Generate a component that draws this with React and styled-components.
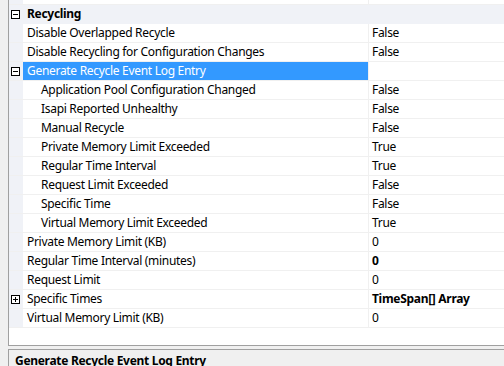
import React from "react";
import styled, { createGlobalStyle } from "styled-components";

const GlobalStyle = createGlobalStyle`
  html, body {
    margin: 0;
    padding: 0;
    background: #f0f0f0;
  }
  body {
    font-family: "Noto Sans", "Open Sans", sans-serif;
    font-size: 12px;
    letter-spacing: -0.3px;
    color: #000;
  }
`;

const Window = styled.div`
  width: 504px;
  height: 366px;
  overflow: hidden;
  display: flex;
  flex-direction: column;
  gap: 3px;
`;

const Grid = styled.div`
  margin-left: 8px;
  height: 345px;
  flex: none;
  border-left: 1px solid #a0a0a0;
  border-bottom: 1px solid #a0a0a0;
  background: #fff;
  overflow: hidden;
`;

const Scroller = styled.div`
  margin-top: -14px;
`;

const Row = styled.div`
  display: grid;
  grid-template-columns: 14px 346px 1fr;
  height: 18px;
  border-bottom: 1px solid ${(p) => (p.$category ? "#f0f2f7" : "#f0f0f0")};
  background: ${(p) => (p.$category ? "#f0f2f7" : "#fff")};
  line-height: 18px;
  white-space: nowrap;
`;

const Margin = styled.div`
  background: #f0f2f7;
  display: flex;
  align-items: center;
  padding-left: 2px;
`;

const Name = styled.div`
  padding-left: ${(p) => (p.$indent ? 18 : 4)}px;
  border-right: 1px solid ${(p) => (p.$category ? "#f0f2f7" : "#f0f0f0")};
  background: ${(p) => (p.$selected ? "#3399ff" : "transparent")};
  color: ${(p) => (p.$selected ? "#fff" : "#000")};
  font-weight: ${(p) => (p.$category ? 700 : 400)};
  overflow: hidden;
`;

const Value = styled.div`
  padding-left: 3px;
  font-weight: ${(p) => (p.$bold ? 700 : 400)};
  overflow: hidden;
`;

const Expander = styled.span`
  box-sizing: border-box;
  width: 9px;
  height: 9px;
  border: 1px solid #000;
  background: #fff;
  position: relative;
  margin-top: 1px;

  &::before {
    content: "";
    position: absolute;
    left: 1px;
    top: 3px;
    width: 5px;
    height: 1px;
    background: #000;
  }

  &::after {
    content: "";
    display: ${(p) => (p.$open ? "none" : "block")};
    position: absolute;
    left: 3px;
    top: 1px;
    width: 1px;
    height: 5px;
    background: #000;
  }
`;

const Description = styled.div`
  margin-left: 8px;
  flex: 1;
  border-left: 1px solid #a0a0a0;
  border-top: 1px solid #a0a0a0;
  background: #f0f0f0;
  padding: 2px 0 0 6px;
  font-weight: 700;
`;

const rows = [
  { label: "Shutdown Executable Parameters" },
  { label: "Recycling", category: true, expander: "open" },
  { label: "Disable Overlapped Recycle", value: "False" },
  { label: "Disable Recycling for Configuration Changes", value: "False" },
  { label: "Generate Recycle Event Log Entry", value: "", expander: "open", selected: true },
  { label: "Application Pool Configuration Changed", value: "False", indent: true },
  { label: "Isapi Reported Unhealthy", value: "False", indent: true },
  { label: "Manual Recycle", value: "False", indent: true },
  { label: "Private Memory Limit Exceeded", value: "True", indent: true },
  { label: "Regular Time Interval", value: "True", indent: true },
  { label: "Request Limit Exceeded", value: "False", indent: true },
  { label: "Specific Time", value: "False", indent: true },
  { label: "Virtual Memory Limit Exceeded", value: "True", indent: true },
  { label: "Private Memory Limit (KB)", value: "0" },
  { label: "Regular Time Interval (minutes)", value: "0", bold: true },
  { label: "Request Limit", value: "0" },
  { label: "Specific Times", value: "TimeSpan[] Array", bold: true, expander: "closed" },
  { label: "Virtual Memory Limit (KB)", value: "0" },
];

const App = () => {
  return (
    <>
      <GlobalStyle />
      <Window>
        <Grid>
          <Scroller>
            {rows.map((r) => (
              <Row key={r.label} $category={r.category}>
                <Margin>
                  {r.expander && <Expander $open={r.expander === "open"} />}
                </Margin>
                <Name $indent={r.indent} $selected={r.selected} $category={r.category}>
                  {r.label}
                </Name>
                <Value $bold={r.bold}>{r.value}</Value>
              </Row>
            ))}
          </Scroller>
        </Grid>
        <Description>Generate Recycle Event Log Entry</Description>
      </Window>
    </>
  );
};

export default App;
